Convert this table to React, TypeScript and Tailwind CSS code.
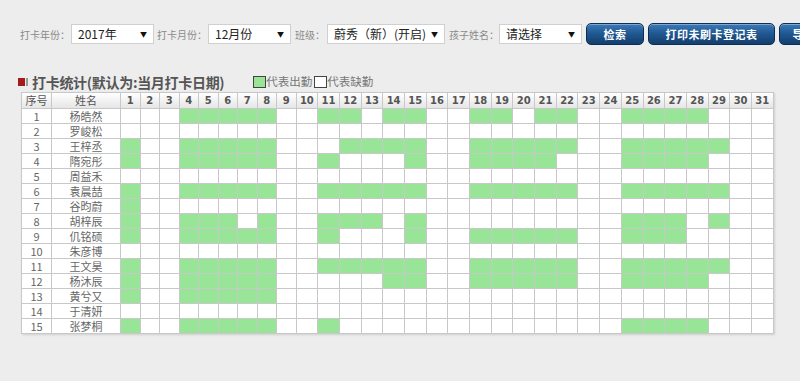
import React from 'react';

interface Student {
  id: number;
  name: string;
  days: number[];
}

const range = (a: number, b: number) => Array.from({ length: b - a + 1 }, (_, i) => a + i);

const students: Student[] = [
  { id: 1, name: '杨皓然', days: [...range(4, 8), 11, 12, 14, 15, 18, 19, 21, 22, ...range(25, 28)] },
  { id: 2, name: '罗峻松', days: [] },
  { id: 3, name: '王梓丞', days: [1, ...range(4, 8), ...range(12, 15), ...range(18, 22), ...range(25, 29)] },
  { id: 4, name: '隋宛彤', days: [1, ...range(4, 8), 11, 15, ...range(18, 21), ...range(25, 28)] },
  { id: 5, name: '周益禾', days: [] },
  { id: 6, name: '袁晨喆', days: [1, ...range(4, 8), ...range(11, 15), ...range(18, 22), ...range(25, 29)] },
  { id: 7, name: '谷昀蔚', days: [1] },
  { id: 8, name: '胡梓辰', days: [1, 4, 5, 6, 8, 11, 12, 13, 15, 25, 26, 27, 29] },
  { id: 9, name: '仉铭硕', days: [1, ...range(4, 8), 11, 15, ...range(18, 22), 25, 26, 27] },
  { id: 10, name: '朱彦博', days: [] },
  { id: 11, name: '王文昊', days: [1, ...range(4, 8), ...range(11, 15), ...range(18, 22), ...range(25, 29)] },
  { id: 12, name: '杨沐辰', days: [1, ...range(4, 8), 14, 15, ...range(18, 22), ...range(25, 28)] },
  { id: 13, name: '黄兮又', days: [1, ...range(4, 8)] },
  { id: 14, name: '于清妍', days: [] },
  { id: 15, name: '张梦桐', days: [1, ...range(4, 8), 11, ...range(25, 28)] },
];

const monthDays = range(1, 31);

const cjk = "font-['Noto_Sans_CJK_SC','Noto_Sans',sans-serif]";

function FakeSelect({ value, width }: { value: string; width: string }) {
  return (
    <div
      className={`${width} h-[20px] bg-white border border-[#d0d0d0] flex items-center justify-between pl-[6px] pr-[6px] text-[12px] text-[#222] shrink-0`}
    >
      <span className="whitespace-nowrap">{value}</span>
      <span className="text-[7px] text-[#111]">▼</span>
    </div>
  );
}

function Label({ text, className = '' }: { text: string; className?: string }) {
  return <span className={`text-[10px] text-[#8a8a8a] whitespace-nowrap shrink-0 ${className}`}>{text}</span>;
}

function BlueButton({ text, width }: { text: string; width: string }) {
  return (
    <div
      className={`${width} h-[22px] shrink-0 rounded-[5px] border border-[#0d2e54] bg-gradient-to-b from-[#3b7bb8] via-[#1f5690] to-[#143f6c] shadow-[inset_0_1px_0_rgba(255,255,255,0.35)] flex items-center justify-center text-white font-bold text-[11px] tracking-[0.5px] whitespace-nowrap overflow-hidden`}
    >
      {text}
    </div>
  );
}

export default function App() {
  return (
    <div className={`w-[800px] h-[381px] overflow-hidden bg-[#ededed] pt-[23px] pl-[20px] ${cjk}`}>
      {/* 查询条件 */}
      <div className="flex items-center h-[22px] w-[800px]">
        <Label text="打卡年份：" />
        <div className="ml-[1px]">
          <FakeSelect value="2017年" width="w-[83px]" />
        </div>
        <Label text="打卡月份：" className="ml-[3px]" />
        <div className="ml-[1px]">
          <FakeSelect value="12月份" width="w-[83px]" />
        </div>
        <Label text="班级：" className="ml-[4px]" />
        <div className="ml-[2px]">
          <FakeSelect value="蔚秀（新）(开启)" width="w-[118px]" />
        </div>
        <Label text="孩子姓名：" className="ml-[4px]" />
        <div className="ml-0">
          <FakeSelect value="请选择" width="w-[83px]" />
        </div>
        <div className="ml-[4px]">
          <BlueButton text="检索" width="w-[58px]" />
        </div>
        <div className="ml-[4px]">
          <BlueButton text="打印未刷卡登记表" width="w-[127px]" />
        </div>
        <div className="ml-[4px]">
          <BlueButton text="导出Excel" width="w-[80px]" />
        </div>
      </div>

      {/* 标题 + 图例 */}
      <div className="flex items-center h-[18px] mt-[28px] -ml-[2px]">
        <span className="w-[7px] h-[8px] bg-[#a31b1b]" />
        <span className="w-[2px] h-[8px] bg-[#9a9a9a] ml-[1px]" />
        <span className="ml-[4px] text-[14px] font-bold text-[#555] whitespace-nowrap tracking-[-0.3px]">
          打卡统计(默认为:当月打卡日期)
        </span>
        <span className="ml-[29px] w-[13px] h-[12px] bg-[#98e598] border border-[#444]" />
        <span className="text-[11.5px] text-[#777] whitespace-nowrap">代表出勤</span>
        <span className="ml-[2px] w-[13px] h-[12px] bg-white border border-[#444]" />
        <span className="text-[11.5px] text-[#777] whitespace-nowrap">代表缺勤</span>
      </div>

      {/* 考勤表 */}
      <table className="mt-[1px] ml-[1px] border-collapse table-fixed w-[752px] bg-white shadow-[1px_1px_2px_rgba(0,0,0,0.12)]">
        <colgroup>
          <col className="w-[30px]" />
          <col className="w-[69px]" />
          {monthDays.map(d => (
            <col key={d} className={d < 10 ? 'w-[19.5px]' : 'w-[21.7px]'} />
          ))}
        </colgroup>
        <thead>
          <tr className="h-[16px] bg-gradient-to-b from-white to-[#e4e4e4]">
            <th className="border border-[#c8c8c8] p-0 text-[11px] font-normal text-[#555] leading-none">序号</th>
            <th className="border border-[#c8c8c8] p-0 text-[11px] font-normal text-[#555] leading-none">姓名</th>
            {monthDays.map(d => (
              <th
                key={d}
                className="border border-[#c8c8c8] p-0 text-[10px] font-bold text-[#555] leading-none font-['DejaVu_Sans',sans-serif]"
              >
                {d}
              </th>
            ))}
          </tr>
        </thead>
        <tbody>
          {students.map(s => (
            <tr key={s.id} className="h-[15px]">
              <td className="border border-[#c8c8c8] p-0 text-center text-[11px] text-[#666] leading-none">{s.id}</td>
              <td className="border border-[#c8c8c8] p-0 text-center text-[11px] text-[#666] leading-none">{s.name}</td>
              {monthDays.map(d => (
                <td
                  key={d}
                  className={`border border-[#c8c8c8] p-0 ${s.days.includes(d) ? 'bg-[#98e598]' : 'bg-white'}`}
                />
              ))}
            </tr>
          ))}
        </tbody>
      </table>
    </div>
  );
}
